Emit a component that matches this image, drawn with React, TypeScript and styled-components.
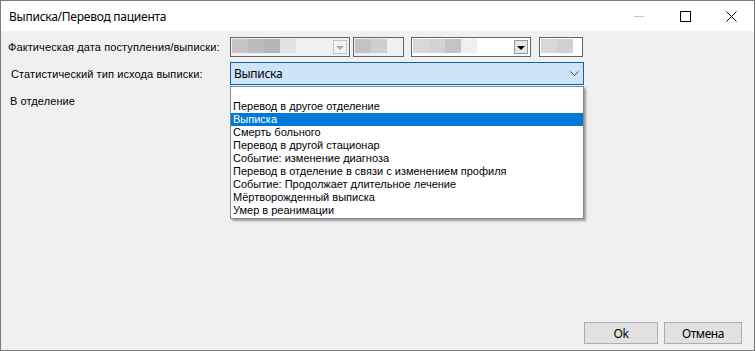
import { FC } from 'react';
import styled, { createGlobalStyle } from 'styled-components';

const GlobalStyle = createGlobalStyle`
	html, body {
		margin: 0;
		padding: 0;
		background: #ffffff;
	}
	* {
		box-sizing: border-box;
	}
`;

const outcomes = [
	'',
	'Перевод в другое отделение',
	'Выписка',
	'Смерть больного',
	'Перевод в другой стационар',
	'Событие: изменение диагноза',
	'Перевод в отделение в связи с изменением профиля',
	'Событие: Продолжает длительное лечение',
	'Мёртворожденный выписка',
	'Умер в реанимации',
];

const selectedOutcome = 'Выписка';

type Blur = { colors: string[] };

const BlurCells: FC<Blur> = ({ colors }) => (
	<BlurStrip>
		{colors.map((c, i) => (
			<BlurCell key={i} $color={c} />
		))}
	</BlurStrip>
);

const App: FC = () => {
	return (
		<>
			<GlobalStyle />
			<Window>
				<TitleBar>
					<Title>Выписка/Перевод пациента</Title>
					<Controls>
						<ControlButton>
							<svg width="10" height="1" viewBox="0 0 10 1">
								<rect width="10" height="1" fill="#c8c8c8" />
							</svg>
						</ControlButton>
						<ControlButton>
							<svg width="11" height="11" viewBox="0 0 11 11">
								<rect x="0.5" y="0.5" width="10" height="10" fill="none" stroke="#000" />
							</svg>
						</ControlButton>
						<ControlButton>
							<svg width="11" height="11" viewBox="0 0 11 11">
								<path d="M0.5 0.5 L10.5 10.5 M10.5 0.5 L0.5 10.5" stroke="#000" strokeWidth="1" />
							</svg>
						</ControlButton>
					</Controls>
				</TitleBar>

				<Body>
					<DateRow>
						<Label>Фактическая дата поступления/выписки:</Label>
						<Fields>
							<DateBox $width={120} $disabled>
								<BlurCells colors={['#c9c3c3', '#bdbcbd', '#b5b5b7', '#e2e2e2']} />
								<DropBtn $disabled>
									<Arrow $color="#a8a8a8" />
								</DropBtn>
							</DateBox>
							<DateBox $width={51} $disabled>
								<BlurCells colors={['#c6c2c3', '#cfcfcf']} />
							</DateBox>
							<DateBox $width={120} $gap={7}>
								<BlurCells colors={['#dcd7d7', '#d3d2d6', '#c4c4c6', '#efefef']} />
								<DropBtn>
									<Arrow $color="#000" />
								</DropBtn>
							</DateBox>
							<DateBox $width={44} $gap={8}>
								<BlurCells colors={['#dad6d6', '#d1d0d4']} />
							</DateBox>
						</Fields>
					</DateRow>

					<OutcomeRow>
						<Label $indent={3}>Статистический тип исхода выписки:</Label>
						<Combo>
							<ComboText>{selectedOutcome}</ComboText>
							<svg width="9" height="5" viewBox="0 0 9 5">
								<path d="M0.5 0.5 L4.5 4.5 L8.5 0.5" fill="none" stroke="#444" strokeWidth="1" />
							</svg>
						</Combo>
					</OutcomeRow>

					<DeptRow>
						<Label $indent={2}>В отделение</Label>
					</DeptRow>

					<DropList>
						{outcomes.map((o, i) => (
							<DropItem key={i} $selected={o === selectedOutcome}>
								{o}
							</DropItem>
						))}
					</DropList>

					<Footer>
						<DialogButton $width={74}>Ok</DialogButton>
						<DialogButton $width={78}>Отмена</DialogButton>
					</Footer>
				</Body>
			</Window>
		</>
	);
};

const Window = styled.div`
	width: 755px;
	height: 351px;
	border: 1px solid #7a7a7a;
	display: flex;
	flex-direction: column;
	background: #f0f0f0;
	font-family: 'Liberation Sans', Arial, sans-serif;
	font-size: 11px;
	color: #000;
`;

const TitleBar = styled.div`
	height: 30px;
	background: #ffffff;
	display: flex;
	align-items: center;
	padding-left: 8px;
	flex-shrink: 0;
`;

const Title = styled.div`
	font-family: 'Noto Sans', 'Segoe UI', sans-serif;
	font-size: 12px;
	letter-spacing: -0.25px;
	flex: 1;
	padding-top: 1px;
`;

const Controls = styled.div`
	display: flex;
	height: 100%;
`;

const ControlButton = styled.div`
	width: 46px;
	height: 100%;
	display: flex;
	align-items: center;
	justify-content: center;
`;

const Body = styled.div`
	flex: 1;
	position: relative;
	display: flex;
	flex-direction: column;
	padding: 6px 0 0 7px;
`;

const DateRow = styled.div`
	display: flex;
	align-items: center;
	height: 20px;
`;

const Label = styled.div<{ $indent?: number }>`
	width: 222px;
	padding-left: ${(p) => p.$indent ?? 0}px;
	white-space: nowrap;
	flex-shrink: 0;
	letter-spacing: 0.1px;
`;

const Fields = styled.div`
	display: flex;
	align-items: center;
`;

const DateBox = styled.div<{ $width: number; $disabled?: boolean; $gap?: number }>`
	width: ${(p) => p.$width}px;
	height: 20px;
	margin-left: ${(p) => p.$gap ?? 3}px;
	border: 1px solid #646464;
	background: ${(p) => (p.$disabled ? '#f0f0f0' : '#ffffff')};
	display: flex;
	align-items: center;
	padding: 0 1px;
	&:first-child {
		margin-left: 0;
	}
`;

const BlurStrip = styled.div`
	display: flex;
	flex: 1;
	height: 100%;
	padding: 1px 0 3px;
`;

const BlurCell = styled.div<{ $color: string }>`
	width: 16px;
	height: 100%;
	background: ${(p) => p.$color};
`;

const DropBtn = styled.div<{ $disabled?: boolean }>`
	width: 14px;
	height: 14px;
	border: 1px solid ${(p) => (p.$disabled ? '#c4c4c4' : '#9a9a9a')};
	background: ${(p) => (p.$disabled ? '#f4f4f4' : '#e6e6e6')};
	display: flex;
	align-items: center;
	justify-content: center;
	margin-right: 1px;
`;

const Arrow = styled.div<{ $color: string }>`
	width: 0;
	height: 0;
	border-left: 4px solid transparent;
	border-right: 4px solid transparent;
	border-top: 4px solid ${(p) => p.$color};
	margin-top: 1px;
`;

const OutcomeRow = styled.div`
	display: flex;
	align-items: center;
	margin-top: 5px;
	height: 23px;
`;

const Combo = styled.div`
	width: 354px;
	height: 23px;
	border: 1px solid #0a64ad;
	background: #cce4f7;
	display: flex;
	align-items: center;
	padding: 0 4px 0 3px;
`;

const ComboText = styled.div`
	flex: 1;
	font-family: 'Noto Sans', 'Segoe UI', sans-serif;
	font-size: 12px;
	letter-spacing: -0.3px;
`;

const DeptRow = styled.div`
	display: flex;
	align-items: center;
	margin-top: 9px;
	height: 14px;
`;

const DropList = styled.div`
	position: absolute;
	left: 229px;
	top: 55px;
	width: 354px;
	padding: 0 0 1px 0;
	background: #ffffff;
	border: 1px solid #828790;
	box-shadow: 2px 2px 2px rgba(0, 0, 0, 0.35);
	display: flex;
	flex-direction: column;
`;

const DropItem = styled.div<{ $selected?: boolean }>`
	height: 13px;
	line-height: 13px;
	padding-left: 2px;
	white-space: nowrap;
	background: ${(p) => (p.$selected ? '#0078d7' : 'transparent')};
	color: ${(p) => (p.$selected ? '#ffffff' : '#000000')};
`;

const Footer = styled.div`
	margin-top: auto;
	display: flex;
	justify-content: flex-end;
	gap: 6px;
	padding: 0 12px 6px 0;
`;

const DialogButton = styled.div<{ $width: number }>`
	width: ${(p) => p.$width}px;
	height: 22px;
	border: 1px solid #adadad;
	background: #e1e1e1;
	display: flex;
	align-items: center;
	justify-content: center;
	font-family: 'Noto Sans', 'Segoe UI', sans-serif;
	font-size: 12px;
	letter-spacing: -0.4px;
`;

export default App;
